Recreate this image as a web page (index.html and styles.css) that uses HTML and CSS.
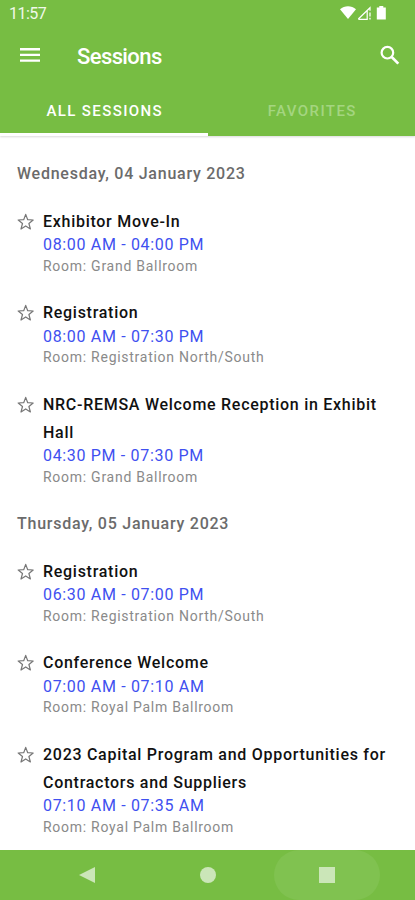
FILE: index.html
```html
<!DOCTYPE html>
<html lang="en">
<head>
    <meta charset="utf-8">
    <title>Sessions</title>
    <link rel="stylesheet" href="styles.css">
</head>
<body>
<svg class="defs" width="0" height="0">
    <symbol id="star" viewBox="0 0 18 18">
        <path d="M8.7 1.4L10.7 6.7l5.5.3-4.3 3.5 1.5 5.5-4.7-3.1L4 16l1.5-5.5L1.2 7l5.5-.3z" fill="none" stroke="#777" stroke-width="1.2" stroke-linejoin="round"/>
    </symbol>
</svg>

<div class="screen">
    <header class="header">
        <div class="status">
            <span class="clock">11:57</span>
            <svg class="statusIcons" width="48" height="16" viewBox="0 0 48 16">
                <path d="M-1 4.2C3.5.2 10.5.2 15 4.2L7 14z" fill="#fff"/>
                <path d="M17.3 14L29 2.7v3M17.3 14.4h8.9V6" fill="none" stroke="#fff" stroke-width="1.2"/>
                <path d="M29 7.4v4M29 12.7v1.8" stroke="#fff" stroke-width="1.3"/>
                <path d="M38.3 1h4v1.5h2.5v12h-9V2.5h2.5z" fill="#fff"/>
            </svg>
        </div>
        <div class="toolbar">
            <svg class="menu" width="20" height="16" viewBox="0 0 20 16">
                <path d="M0 2.2h20M0 7.9h20M0 13.6h20" stroke="#fff" stroke-width="2.4"/>
            </svg>
            <h1 class="title">Sessions</h1>
            <svg class="search" width="20" height="20" viewBox="0 0 20 20">
                <circle cx="7.4" cy="7.7" r="5.8" fill="none" stroke="#fff" stroke-width="2.2"/>
                <path d="M11.7 12l6.6 6.6" stroke="#fff" stroke-width="2.7"/>
            </svg>
        </div>
        <nav class="tabs">
            <div class="tab active">ALL SESSIONS</div>
            <div class="tab">FAVORITES</div>
        </nav>
    </header>

    <main class="list">
        <h2 class="date">Wednesday, 04 January 2023</h2>
        <div class="session">
            <svg class="star"><use href="#star"/></svg>
            <div class="info">
                <div class="name">Exhibitor Move-In</div>
                <div class="time">08:00 AM - 04:00 PM</div>
                <div class="room">Room: Grand Ballroom</div>
            </div>
        </div>
        <div class="session">
            <svg class="star"><use href="#star"/></svg>
            <div class="info">
                <div class="name">Registration</div>
                <div class="time">08:00 AM - 07:30 PM</div>
                <div class="room">Room: Registration North/South</div>
            </div>
        </div>
        <div class="session">
            <svg class="star"><use href="#star"/></svg>
            <div class="info">
                <div class="name">NRC-REMSA Welcome Reception in Exhibit Hall</div>
                <div class="time">04:30 PM - 07:30 PM</div>
                <div class="room">Room: Grand Ballroom</div>
            </div>
        </div>

        <h2 class="date">Thursday, 05 January 2023</h2>
        <div class="session">
            <svg class="star"><use href="#star"/></svg>
            <div class="info">
                <div class="name">Registration</div>
                <div class="time">06:30 AM - 07:00 PM</div>
                <div class="room">Room: Registration North/South</div>
            </div>
        </div>
        <div class="session">
            <svg class="star"><use href="#star"/></svg>
            <div class="info">
                <div class="name">Conference Welcome</div>
                <div class="time">07:00 AM - 07:10 AM</div>
                <div class="room">Room: Royal Palm Ballroom</div>
            </div>
        </div>
        <div class="session">
            <svg class="star"><use href="#star"/></svg>
            <div class="info">
                <div class="name">2023 Capital Program and Opportunities for Contractors and Suppliers</div>
                <div class="time">07:10 AM - 07:35 AM</div>
                <div class="room">Room: Royal Palm Ballroom</div>
            </div>
        </div>
    </main>

    <footer class="navbar">
        <div class="navButton"><svg width="20" height="18" viewBox="0 0 20 18"><path d="M0 9L16 1v16z" fill="#cbe6b8"/></svg></div>
        <div class="navButton"><div class="home"></div></div>
        <div class="navButton pressed"><div class="recent"></div></div>
    </footer>
</div>
</body>
</html>
```

FILE: styles.css
```css
* {
    box-sizing: border-box;
}

body {
    margin: 0;
    background: #fff;
    font-family: Roboto, "Liberation Sans", sans-serif;
}

h1, h2 {
    margin: 0;
    font-weight: 500;
}

.defs {
    position: absolute;
}

.screen {
    display: flex;
    flex-direction: column;
    height: 900px;
    overflow: hidden;
}

/* header */
.header {
    flex: none;
    display: flex;
    flex-direction: column;
    height: 136px;
    background: #77bd43;
    color: #fff;
    box-shadow: 0 1px 2px rgba(0, 0, 0, 0.15);
}

.status {
    display: flex;
    justify-content: space-between;
    height: 28px;
    padding: 5px 26px 0 9px;
}

.statusIcons {
    overflow: visible;
}

.clock {
    font-size: 16px;
    line-height: 18px;
    letter-spacing: -0.5px;
    color: #f0f9e9;
}

.toolbar {
    display: flex;
    align-items: center;
    height: 56px;
    padding: 0 15px 0 20px;
}

.title {
    flex: 1;
    margin-left: 37px;
    font-size: 22px;
    line-height: 28px;
    letter-spacing: -0.6px;
    padding-top: 2px;
}

.menu {
    margin-bottom: 2px;
}

.search {
    margin-bottom: 2px;
}

.tabs {
    flex: 1;
    display: flex;
}

.tab {
    flex: 1;
    padding: 17px 0 0 2px;
    border-bottom: 3px solid transparent;
    text-align: center;
    font-size: 15px;
    font-weight: 500;
    line-height: 20px;
    letter-spacing: 1.4px;
    color: #a4d580;
}

.active {
    color: #fff;
    border-color: #fff;
}

/* sessions */
.list {
    flex: 1;
    padding: 24px 17px 0;
    overflow: hidden;
}

.date {
    margin-bottom: 20px;
    font-size: 16px;
    line-height: 28.2px;
    letter-spacing: 0.75px;
    color: #6b6b6b;
}

.session {
    display: flex;
    gap: 8px;
    margin-bottom: 21px;
}

.star {
    flex: none;
    width: 18px;
    height: 18px;
    margin-top: 5px;
}

.info {
    flex: 1;
}

.name {
    font-size: 16px;
    font-weight: 500;
    line-height: 28.2px;
    letter-spacing: 0.72px;
    color: #111;
}

.time {
    font-size: 16px;
    line-height: 17.8px;
    letter-spacing: 0.67px;
    color: #4050f0;
}

.room {
    font-size: 14px;
    line-height: 24.2px;
    letter-spacing: 0.73px;
    color: #8a8a8a;
}

/* system buttons */
.navbar {
    flex: none;
    display: flex;
    justify-content: center;
    gap: 13px;
    height: 50px;
    background: #77bd43;
}

.navButton {
    display: flex;
    align-items: center;
    justify-content: center;
    width: 106px;
    height: 50px;
    border-radius: 25px;
}

.pressed {
    background: #80c250;
}

.home {
    width: 16px;
    height: 16px;
    border-radius: 50%;
    background: #cbe6b8;
}

.recent {
    width: 16px;
    height: 16px;
    background: #cbe6b8;
}
```
